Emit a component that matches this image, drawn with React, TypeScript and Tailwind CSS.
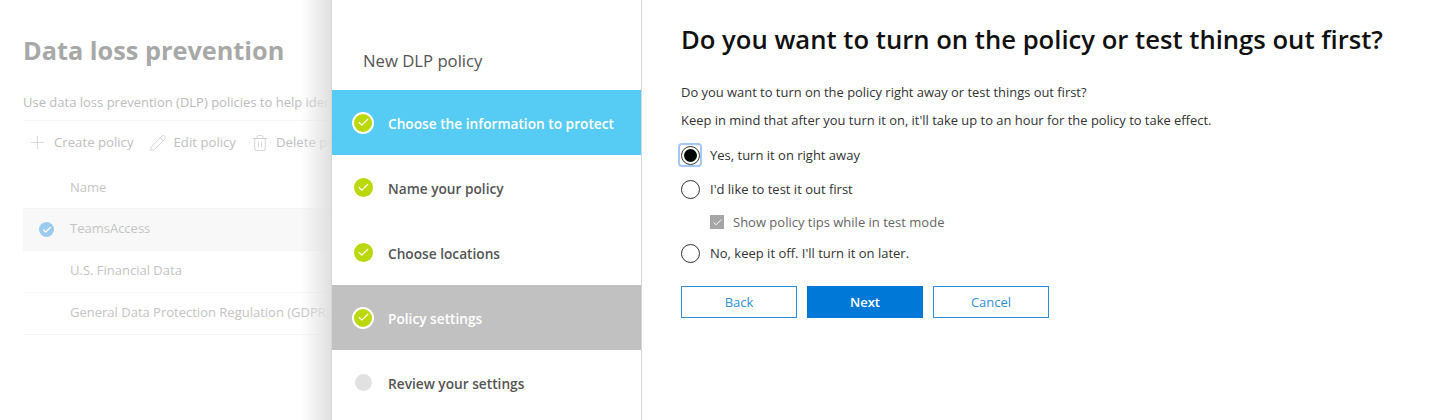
import { Check, Plus, Pencil, Trash2 } from "lucide-react";

const steps = [
  { label: "Choose the information to protect", state: "active", done: true },
  { label: "Name your policy", state: "", done: true },
  { label: "Choose locations", state: "", done: true },
  { label: "Policy settings", state: "current", done: true },
  { label: "Review your settings", state: "", done: false },
];

function StepDot({ done, ring }: { done: boolean; ring: boolean }) {
  if (!done) return <span className="h-[17px] w-[17px] rounded-full bg-[#e1e1e1]" />;
  return (
    <span
      className={`flex items-center justify-center rounded-full bg-[#bad80a] ${
        ring ? "h-[22px] w-[22px] border-2 border-white" : "h-[19px] w-[19px]"
      }`}
    >
      <Check size={13} strokeWidth={2} className="text-white" />
    </span>
  );
}

function Radio({ checked, label }: { checked?: boolean; label: string }) {
  return (
    <div className="-ml-[1px] flex h-[20px] items-center">
      <span className={`flex h-[20px] w-[20px] items-center justify-center ${checked ? "rounded-[2px] outline-2 outline-[#a3c8f5]" : ""}`}>
        <span className="flex h-[19px] w-[19px] items-center justify-center rounded-full border border-[#333] bg-white">
          {checked && <span className="h-[13px] w-[13px] rounded-full bg-black" />}
        </span>
      </span>
      <span className="ml-[10px] pt-[1px] text-[13px] text-[#333]">{label}</span>
    </div>
  );
}

function PolicyRow({ name, selected }: { name: string; selected?: boolean }) {
  return (
    <div
      className={`flex h-[42px] items-center border-b border-[#f4f4f4] ${
        selected ? "bg-[#f8f8f8]" : ""
      }`}
    >
      <span className="flex w-[47px] justify-center">
        {selected && (
          <span className="flex h-[15px] w-[15px] items-center justify-center rounded-full bg-[#9ccbf1]">
            <Check size={10} strokeWidth={3} className="text-white" />
          </span>
        )}
      </span>
      <span className="pb-[2px] whitespace-nowrap text-[13px] font-medium text-[#c4c4c4]">{name}</span>
    </div>
  );
}

export default function App() {
  return (
    <div className="flex h-[420px] w-[1447px] overflow-hidden bg-white font-['Open_Sans','Noto_Sans',sans-serif]">
      {/* dimmed page behind the panel */}
      <div className="relative w-[331px] shrink-0 overflow-hidden pl-[23px]">
        <h1 className="mt-[32px] whitespace-nowrap text-[25.3px] leading-[36px] font-bold text-[#a8a8a8]">
          Data loss prevention
        </h1>
        <p className="mt-[25px] whitespace-nowrap text-[13px] leading-[18px] text-[#bcbcbc]">
          Use data loss prevention (DLP) policies to help identify and protect sensitive information
        </p>
        <div className="mt-[9px] w-[600px] border-t border-[#f4f4f4]" />
        <div className="flex h-[42px] items-center pt-[1px] pl-[4px] text-[13.2px] whitespace-nowrap text-[#c0c0c0]">
          <Plus size={21} strokeWidth={0.8} className="shrink-0 text-[#c8c8c8]" />
          <span className="ml-[6px]">Create policy</span>
          <Pencil size={18} strokeWidth={1} className="ml-[15px] shrink-0 text-[#c8c8c8]" />
          <span className="ml-[7px]">Edit policy</span>
          <Trash2 size={18} strokeWidth={1} className="ml-[15px] shrink-0 text-[#c8c8c8]" />
          <span className="ml-[7px]">Delete policy</span>
        </div>
        <div className="flex h-[46px] items-center border-b border-[#f4f4f4] pt-[4px] pl-[47px] text-[13px] text-[#c4c4c4]">
          Name
        </div>
        <PolicyRow name="TeamsAccess" selected />
        <PolicyRow name="U.S. Financial Data" />
        <PolicyRow name="General Data Protection Regulation (GDPR)" />
        <div className="pointer-events-none absolute inset-y-0 right-0 w-[30px] bg-gradient-to-r from-transparent to-[#e0e0e0]" />
      </div>

      {/* wizard steps */}
      <nav className="w-[311px] shrink-0 border-x border-[#d6d6d6] bg-white">
        <div className="flex h-[90px] items-center pt-[32px] pl-[31px] text-[16.7px] text-[#555]">New DLP policy</div>
        {steps.map((step) => (
          <div
            key={step.label}
            className={`flex h-[65px] items-center ${
              step.state === "active"
                ? "bg-[#56cbf4] text-white"
                : step.state === "current"
                  ? "bg-[#c1c1c1] text-white"
                  : "text-[#555]"
            }`}
          >
            <span className="ml-[20px] flex w-[22px] shrink-0 items-center justify-center">
              <StepDot done={step.done} ring={step.state !== ""} />
            </span>
            <span className="ml-[14px] pt-[3px] text-[13.7px] font-semibold whitespace-nowrap">{step.label}</span>
          </div>
        ))}
      </nav>

      {/* right content */}
      <main className="flex-1 pt-[22px] pl-[39px]">
        <h2 className="text-[25.65px] leading-[36px] font-semibold whitespace-nowrap text-[#111]">
          Do you want to turn on the policy or test things out first?
        </h2>
        <p className="mt-[25px] text-[12.93px] leading-[18px] text-[#333]">
          Do you want to turn on the policy right away or test things out first?
        </p>
        <p className="mt-[10px] text-[12.93px] leading-[18px] text-[#333]">
          Keep in mind that after you turn it on, it'll take up to an hour for the policy to take effect.
        </p>
        <div className="mt-[16px] flex flex-col">
          <Radio checked label="Yes, turn it on right away" />
          <div className="mt-[14px]">
            <Radio label="I'd like to test it out first" />
          </div>
          <div className="mt-[13px] flex h-[20px] items-center pl-[29px]">
            <span className="flex h-[14px] w-[14px] items-center justify-center bg-[#a6a6a6]">
              <Check size={11} strokeWidth={2} className="text-white" />
            </span>
            <span className="ml-[9px] pt-[1px] text-[13px] text-[#666]">Show policy tips while in test mode</span>
          </div>
          <div className="mt-[11px]">
            <Radio label="No, keep it off. I'll turn it on later." />
          </div>
        </div>
        <div className="mt-[23px] flex gap-[10px]">
          <button className="h-[32px] w-[116px] border border-[#2f8fde] bg-white pt-[1px] text-[13px] text-[#2f8fde]">Back</button>
          <button className="h-[32px] w-[116px] bg-[#0078d7] pt-[1px] text-[13px] font-semibold text-white">Next</button>
          <button className="h-[32px] w-[116px] border border-[#2f8fde] bg-white pt-[1px] text-[13px] text-[#2f8fde]">Cancel</button>
        </div>
      </main>
    </div>
  );
}
